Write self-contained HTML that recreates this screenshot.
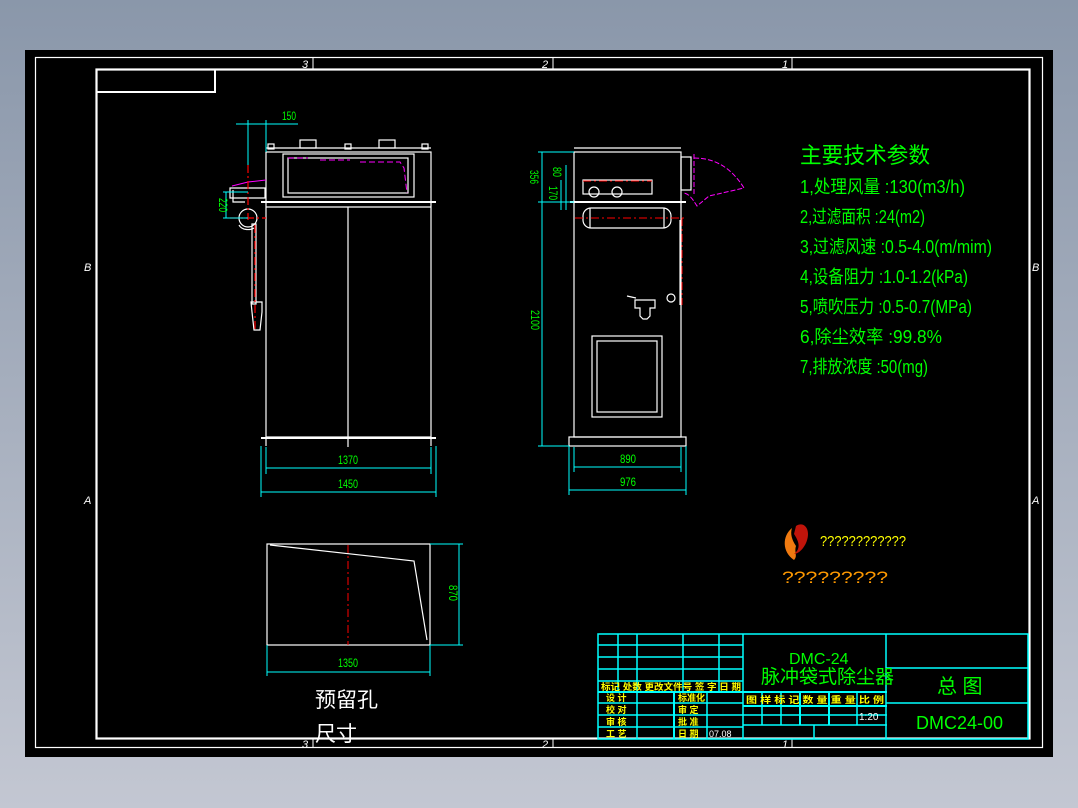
<!DOCTYPE html>
<html><head><meta charset="utf-8"><style>
html,body{margin:0;padding:0;width:1078px;height:808px;overflow:hidden;background:#8f9bad}
svg{display:block}
text{font-family:"Liberation Sans","Noto Sans CJK SC",sans-serif}
</style></head><body>
<svg width="1078" height="808" viewBox="0 0 1078 808" xmlns="http://www.w3.org/2000/svg">
<defs><linearGradient id="bg" x1="0" y1="0" x2="0" y2="1"><stop offset="0" stop-color="#8a97aa"/><stop offset="1" stop-color="#c3c7d2"/></linearGradient></defs>
<rect width="1078" height="808" fill="url(#bg)"/>
<rect x="25" y="50" width="1028" height="707" fill="#000"/>
<g fill="none" stroke="#fff">
<rect x="35.5" y="57.5" width="1007" height="690" stroke-width="1.2"/>
<rect x="96.5" y="69.5" width="933" height="669" stroke-width="2.2"/>
<polyline points="96.5,92 215,92 215,69.5" stroke-width="2"/>
<line x1="313" y1="58" x2="313" y2="69"/><line x1="553" y1="58" x2="553" y2="69"/><line x1="792" y1="58" x2="792" y2="69"/>
<line x1="313" y1="739" x2="313" y2="748"/><line x1="553" y1="739" x2="553" y2="748"/><line x1="792" y1="739" x2="792" y2="748"/>
</g>
<g fill="#fff" font-size="11" font-style="italic">
<text x="302" y="68">3</text><text x="542" y="68">2</text><text x="782" y="68">1</text>
<text x="302" y="748">3</text><text x="542" y="748">2</text><text x="782" y="748">1</text>
<text x="84" y="271">B</text><text x="1032" y="271">B</text>
<text x="84" y="504">A</text><text x="1032" y="504">A</text>
</g>

<!-- LEFT VIEW -->
<g fill="none" stroke="#fff" stroke-width="1.2">
<rect x="266" y="152" width="165" height="285"/>
<line x1="266" y1="148" x2="431" y2="148"/>
<rect x="283" y="154" width="131" height="43"/>
<rect x="288" y="158" width="120" height="35"/>
<line x1="261" y1="202" x2="436" y2="202" stroke-width="2"/>
<line x1="266" y1="207" x2="431" y2="207"/>
<line x1="348" y1="207" x2="348" y2="447"/>
<line x1="261" y1="438" x2="436" y2="438" stroke-width="2"/>
<line x1="266" y1="438" x2="266" y2="446"/><line x1="431" y1="438" x2="431" y2="446"/>
<rect x="300" y="140" width="16" height="8"/><rect x="379" y="140" width="16" height="8"/>
<rect x="268" y="144" width="6" height="5"/><rect x="345" y="144" width="6" height="5"/><rect x="422" y="144" width="6" height="5"/>
<circle cx="248" cy="218" r="9"/>
<rect x="252" y="224" width="4" height="80"/>
<path d="M251 302h11v10l-2 18h-6l-2-18z"/>
<path d="M230 188h35v10h-35zM233 190v12h12"/>
<path d="M239 225c3 6 12 5 15 3"/>
</g>
<path d="M232 186l16-4 18-2" stroke="#f0f" fill="none"/>
<path d="M288 158h20M320 160h30M360 162h40l4 6 3 25" stroke="#f0f" stroke-dasharray="6 3" fill="none"/>
<g stroke="#f00" stroke-width="1.2" stroke-dasharray="8 3 2 3"><line x1="248" y1="165" x2="248" y2="220"/><line x1="255" y1="225" x2="255" y2="330"/><line x1="230" y1="218" x2="266" y2="218"/></g>
<g stroke="#0ff" fill="none">
<line x1="236" y1="124" x2="298" y2="124"/><line x1="248" y1="120" x2="248" y2="165"/><line x1="266" y1="120" x2="266" y2="152"/>
<line x1="223" y1="192" x2="248" y2="192"/><line x1="223" y1="218" x2="248" y2="218"/><line x1="226" y1="192" x2="226" y2="218"/>
<line x1="266" y1="447" x2="266" y2="474"/><line x1="431" y1="447" x2="431" y2="474"/>
<line x1="261" y1="446" x2="261" y2="497"/><line x1="436" y1="446" x2="436" y2="497"/>
<line x1="266" y1="468" x2="431" y2="468"/><line x1="261" y1="492" x2="436" y2="492"/>
</g>
<g fill="#0f0" font-size="12" text-anchor="middle">
<text x="289" y="120" textLength="14" lengthAdjust="spacingAndGlyphs">150</text>
<text x="348" y="464" textLength="20" lengthAdjust="spacingAndGlyphs">1370</text>
<text x="348" y="488" textLength="20" lengthAdjust="spacingAndGlyphs">1450</text>
<text transform="translate(219,205) rotate(90)" textLength="14" lengthAdjust="spacingAndGlyphs">220</text>
</g>

<!-- RIGHT VIEW -->
<g fill="none" stroke="#fff" stroke-width="1.2">
<rect x="574" y="152" width="107" height="285"/>
<line x1="574" y1="148" x2="681" y2="148"/>
<rect x="583" y="180" width="69" height="14"/>
<line x1="570" y1="202" x2="686" y2="202" stroke-width="2"/>
<rect x="583" y="208" width="88" height="20" rx="8"/>
<line x1="590" y1="208" x2="590" y2="228"/><line x1="664" y1="208" x2="664" y2="228"/>
<rect x="569" y="437" width="117" height="9"/>
<rect x="592" y="336" width="70" height="81"/>
<rect x="597" y="341" width="60" height="71"/>
<circle cx="594" cy="192" r="5"/><circle cx="617" cy="192" r="5"/>
<rect x="681" y="157" width="10" height="33"/>
<path d="M635 300h20v8h-5v8l-3 3h-4l-3-3v-8h-5z"/><circle cx="671" cy="298" r="4"/>
<line x1="627" y1="296" x2="636" y2="298"/>
<line x1="680" y1="220" x2="680" y2="305"/>
</g>
<g stroke="#f0f" fill="none" stroke-dasharray="5 2"><path d="M694 158c25 0 40 14 50 30l-35 8-12 10c-5-8-8-12-13-13"/><line x1="694" y1="154" x2="694" y2="195"/></g>
<g stroke="#f00" stroke-dasharray="8 3 2 3"><line x1="575" y1="218" x2="685" y2="218"/><line x1="682" y1="218" x2="682" y2="305"/><line x1="583" y1="181" x2="652" y2="181"/></g>
<g stroke="#0ff" fill="none">
<line x1="538" y1="152" x2="574" y2="152"/><line x1="538" y1="202" x2="574" y2="202"/><line x1="538" y1="446" x2="569" y2="446"/>
<line x1="542" y1="152" x2="542" y2="446"/><line x1="561" y1="180" x2="561" y2="210"/><line x1="566" y1="165" x2="566" y2="210"/>
<line x1="574" y1="447" x2="574" y2="472"/><line x1="681" y1="447" x2="681" y2="472"/>
<line x1="569" y1="446" x2="569" y2="495"/><line x1="686" y1="446" x2="686" y2="495"/>
<line x1="574" y1="467" x2="681" y2="467"/><line x1="569" y1="490" x2="686" y2="490"/>
</g>
<g fill="#0f0" font-size="12" text-anchor="middle">
<text x="628" y="463" textLength="16" lengthAdjust="spacingAndGlyphs">890</text>
<text x="628" y="486" textLength="16" lengthAdjust="spacingAndGlyphs">976</text>
<text transform="translate(531,320) rotate(90)" textLength="20" lengthAdjust="spacingAndGlyphs">2100</text>
<text transform="translate(530,177) rotate(90)" textLength="14" lengthAdjust="spacingAndGlyphs">356</text>
<text transform="translate(549,193) rotate(90)" textLength="14" lengthAdjust="spacingAndGlyphs">170</text>
<text transform="translate(553,172) rotate(90)" textLength="10" lengthAdjust="spacingAndGlyphs">80</text>
</g>

<!-- SPEC -->
<g fill="#0f0" font-size="18" lengthAdjust="spacingAndGlyphs">
<text x="800" y="163" font-size="22" textLength="130" lengthAdjust="spacingAndGlyphs">主要技术参数</text>
<text x="800" y="193" textLength="165" lengthAdjust="spacingAndGlyphs">1,处理风量 :130(m3/h)</text>
<text x="800" y="223" textLength="125" lengthAdjust="spacingAndGlyphs">2,过滤面积 :24(m2)</text>
<text x="800" y="253" textLength="192" lengthAdjust="spacingAndGlyphs">3,过滤风速 :0.5-4.0(m/mim)</text>
<text x="800" y="283" textLength="168" lengthAdjust="spacingAndGlyphs">4,设备阻力 :1.0-1.2(kPa)</text>
<text x="800" y="313" textLength="172" lengthAdjust="spacingAndGlyphs">5,喷吹压力 :0.5-0.7(MPa)</text>
<text x="800" y="343" textLength="142" lengthAdjust="spacingAndGlyphs">6,除尘效率 :99.8%</text>
<text x="800" y="373" textLength="128" lengthAdjust="spacingAndGlyphs">7,排放浓度 :50(mg)</text>
</g>

<!-- LOGO -->
<path d="M792 528c-10 8-10 24 2 32 4-4 0-8 2-14-4-6-6-12-4-18z" fill="#f07a10"/>
<path d="M796 526c6-4 12 0 12 8 0 10-8 20-14 20 8-6 4-14 0-20z" fill="#c0140a"/>
<text x="820" y="546" fill="#ff0" font-size="15" textLength="86" lengthAdjust="spacingAndGlyphs">????????????</text>
<text x="782" y="583" fill="#f90" font-size="17" textLength="106" lengthAdjust="spacingAndGlyphs">?????????</text>

<!-- BOTTOM VIEW -->
<g fill="none" stroke="#fff" stroke-width="1.2">
<rect x="267" y="544" width="163" height="101"/>
<path d="M270 545l144 16 13 79"/>
</g>
<line x1="348" y1="545" x2="348" y2="645" stroke="#f00" stroke-dasharray="8 3 2 3"/>
<g stroke="#0ff" fill="none"><line x1="430" y1="544" x2="463" y2="544"/><line x1="459" y1="544" x2="459" y2="645"/><line x1="430" y1="645" x2="463" y2="645"/>
<line x1="267" y1="645" x2="267" y2="676"/><line x1="430" y1="645" x2="430" y2="676"/><line x1="267" y1="672" x2="430" y2="672"/></g>
<text x="348" y="667" fill="#0f0" font-size="12" text-anchor="middle" textLength="20" lengthAdjust="spacingAndGlyphs">1350</text>
<text transform="translate(449,585) rotate(90)" fill="#0f0" font-size="12" textLength="16" lengthAdjust="spacingAndGlyphs">870</text>
<text x="315" y="707" fill="#fff" font-size="21">预留孔</text>
<text x="315" y="741" fill="#fff" font-size="21">尺寸</text>

<!-- TITLE BLOCK -->
<g stroke="#0ff" stroke-width="1.5" fill="none">
<rect x="598" y="634" width="430" height="105"/>
<line x1="598" y1="645" x2="743" y2="645"/><line x1="598" y1="657" x2="743" y2="657"/><line x1="598" y1="669" x2="743" y2="669"/><line x1="598" y1="681" x2="743" y2="681"/>
<line x1="598" y1="692" x2="887" y2="692" stroke-width="2"/>
<line x1="598" y1="703" x2="743" y2="703"/><line x1="598" y1="715" x2="887" y2="715"/><line x1="598" y1="727" x2="743" y2="727"/><line x1="743" y1="706" x2="887" y2="706" stroke-width="2"/><line x1="743" y1="725" x2="887" y2="725"/>
<line x1="618" y1="634" x2="618" y2="692"/><line x1="637" y1="634" x2="637" y2="739"/><line x1="683" y1="634" x2="683" y2="692"/><line x1="719" y1="634" x2="719" y2="692"/>
<line x1="674" y1="692" x2="674" y2="739" stroke-width="2"/><line x1="707" y1="692" x2="707" y2="739"/>
<line x1="743" y1="634" x2="743" y2="739"/>
<line x1="762" y1="692" x2="762" y2="725"/><line x1="781" y1="692" x2="781" y2="725"/><line x1="800" y1="692" x2="800" y2="725" stroke-width="2"/><line x1="829" y1="692" x2="829" y2="725" stroke-width="2"/><line x1="857" y1="692" x2="857" y2="725"/><line x1="814" y1="725" x2="814" y2="739"/>
<line x1="886" y1="634" x2="886" y2="739"/>
<line x1="886" y1="668" x2="1028" y2="668"/><line x1="886" y1="703" x2="1028" y2="703"/>
</g>
<g fill="#ff0" font-size="9" font-weight="bold">
<text x="601" y="690" textLength="140" lengthAdjust="spacingAndGlyphs">标记 处数 更改文件号 签 字 日 期</text>
<text x="606" y="701">设 计</text><text x="606" y="713">校 对</text><text x="606" y="725">审 核</text><text x="606" y="737">工 艺</text>
<text x="678" y="701">标准化</text><text x="678" y="713">审 定</text><text x="678" y="725">批 准</text><text x="678" y="737">日 期</text>
<text x="746" y="703" textLength="138" lengthAdjust="spacingAndGlyphs">图 样 标 记 数 量 重 量 比 例</text>
</g>
<text x="709" y="737" fill="#fff" font-size="9">07.08</text>
<text x="859" y="720" fill="#fff" font-size="10">1:20</text>
<text x="789" y="664" fill="#0f0" font-size="16">DMC-24</text>
<text x="761" y="683" fill="#0f0" font-size="19">脉冲袋式除尘器</text>
<text x="937" y="693" fill="#0f0" font-size="20">总  图</text>
<text x="916" y="729" fill="#0f0" font-size="18">DMC24-00</text>
</svg>
</body></html>
